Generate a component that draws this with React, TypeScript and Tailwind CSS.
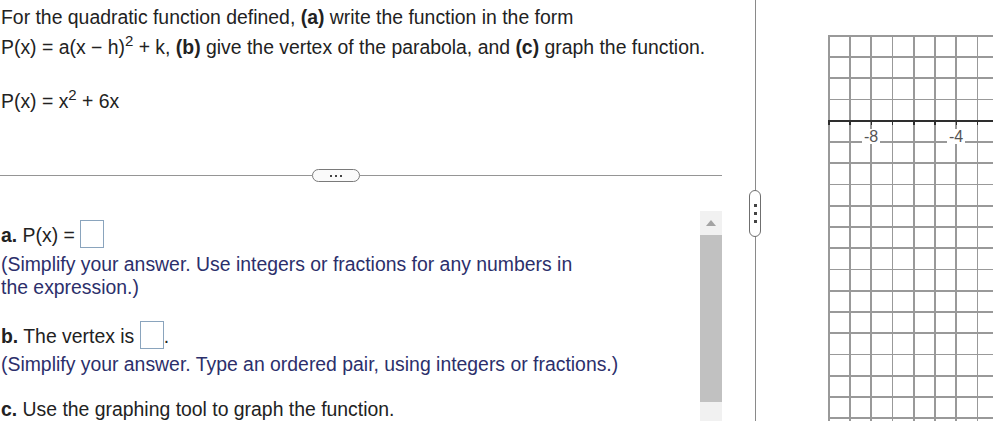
import React from "react";

const F = { fontFamily: '"Liberation Sans", Arial, sans-serif' };

function Grid() {
  const u = 21.25;
  const w = 170;
  const h = 390;
  const axisY = 85;
  const vx: number[] = [];
  for (let i = 0; i * u <= w; i++) vx.push(i * u);
  const hy: number[] = [];
  for (let k = -4; axisY + k * u <= h; k++) hy.push(axisY + k * u);
  return (
    <svg width={w} height={h} className="block" shapeRendering="crispEdges">
      {vx.map((x) => (
        <line key={"v" + x} x1={x + 0.75} y1={0} x2={x + 0.75} y2={h} stroke="#999" strokeWidth={1.6} />
      ))}
      {hy.map((y) => (
        <line key={"h" + y} x1={0} y1={y + 0.75} x2={w} y2={y + 0.75} stroke="#999" strokeWidth={1.6} />
      ))}
      <line x1={0} y1={axisY + 0.75} x2={w} y2={axisY + 0.75} stroke="#2e2e2e" strokeWidth={2} />
      {vx.map((x) => (
        <line key={"t" + x} x1={x + 0.75} y1={axisY} x2={x + 0.75} y2={axisY + 5} stroke="#2e2e2e" strokeWidth={1.5} />
      ))}
      <rect x={34} y={94} width={18} height={15} fill="white" />
      <rect x={119} y={94} width={18} height={15} fill="white" />
      <text x={43} y={107} textAnchor="middle" fontSize={16} fill="#555" style={F}>-8</text>
      <text x={128} y={107} textAnchor="middle" fontSize={16} fill="#555" style={F}>-4</text>
    </svg>
  );
}

function Box() {
  return <span className="inline-block w-[24px] h-[28px] border border-[#8aa4bd] bg-white align-middle" />;
}

export default function App() {
  return (
    <div className="w-[993px] h-[421px] overflow-hidden bg-white flex text-[19.4px] text-[#222]" style={F}>
      {/* left panel */}
      <div className="w-[722px] shrink-0 flex flex-col">
        <div className="mt-[2px] leading-[30px] pl-[1px]">
          <div>
            For the quadratic function defined, <b>(a)</b> write the function in the form
          </div>
          <div>
            P(x) = a(x − h)<sup className="text-[15px] top-[-8px]">2</sup> + k, <b>(b)</b> give the vertex of the parabola, and <b>(c)</b> graph the function.
          </div>
        </div>
        <div className="mt-[24px] leading-[30px] pl-[1px]">
          P(x) = x<sup className="text-[15px] top-[-8px]">2</sup> + 6x
        </div>
        <div className="mt-[53px] h-[13px] flex items-center">
          <div className="w-[312px] h-px bg-[#959595]" />
          <div className="w-[48px] h-[13px] rounded-full border border-[#7a7a7a] bg-[#fafafa] flex items-center justify-center gap-[3px]">
            <span className="w-[2px] h-[2px] bg-[#444]" />
            <span className="w-[2px] h-[2px] bg-[#444]" />
            <span className="w-[2px] h-[2px] bg-[#444]" />
          </div>
          <div className="flex-1 h-px bg-[#959595]" />
        </div>
        <div className="flex flex-1">
          <div className="w-[700px] pl-[1px]">
            <div className="mt-[38px] h-[28px] flex items-center">
              <span className="mt-[3px]"><b>a.</b> P(x) =&nbsp;</span>
              <Box />
            </div>
            <div className="mt-[5px] leading-[23px] text-[#2c2f6b]">
              (Simplify your answer. Use integers or fractions for any numbers in
              <br />
              the expression.)
            </div>
            <div className="mt-[22px] h-[28px] flex items-center">
              <span className="mt-[3px]"><b>b.</b> The vertex is&nbsp;</span>
              <Box />
              <span className="mt-[3px]">.</span>
            </div>
            <div className="mt-[4px] leading-[23px] text-[#2c2f6b]">
              (Simplify your answer. Type an ordered pair, using integers or fractions.)
            </div>
            <div className="mt-[22px] leading-[23px]">
              <b>c.</b> Use the graphing tool to graph the function.
            </div>
          </div>
          <div className="w-[22px] mt-[29px] bg-[#f1f1f1] flex flex-col">
            <div className="h-[24px] flex items-center justify-center">
              <svg width="10" height="6" viewBox="0 0 10 6"><polygon points="0,6 5,0 10,6" fill="#a3a3a3" /></svg>
            </div>
            <div className="h-[167px] bg-[#c1c1c1]" />
          </div>
        </div>
      </div>
      {/* divider */}
      <div className="ml-[27px] w-[12px] shrink-0 relative flex justify-center">
        <div className="w-px h-full bg-[#8a8a8a]" />
        <div className="absolute top-[190px] left-0 w-[12px] h-[47px] rounded-full border border-[#6f6f6f] bg-white flex flex-col items-center justify-center gap-[5px]">
          <span className="w-[3px] h-[3px] bg-[#444]" />
          <span className="w-[3px] h-[3px] bg-[#444]" />
          <span className="w-[3px] h-[3px] bg-[#444]" />
        </div>
      </div>
      {/* graph */}
      <div className="pl-[67px] pt-[35px] overflow-hidden">
        <Grid />
      </div>
    </div>
  );
}
